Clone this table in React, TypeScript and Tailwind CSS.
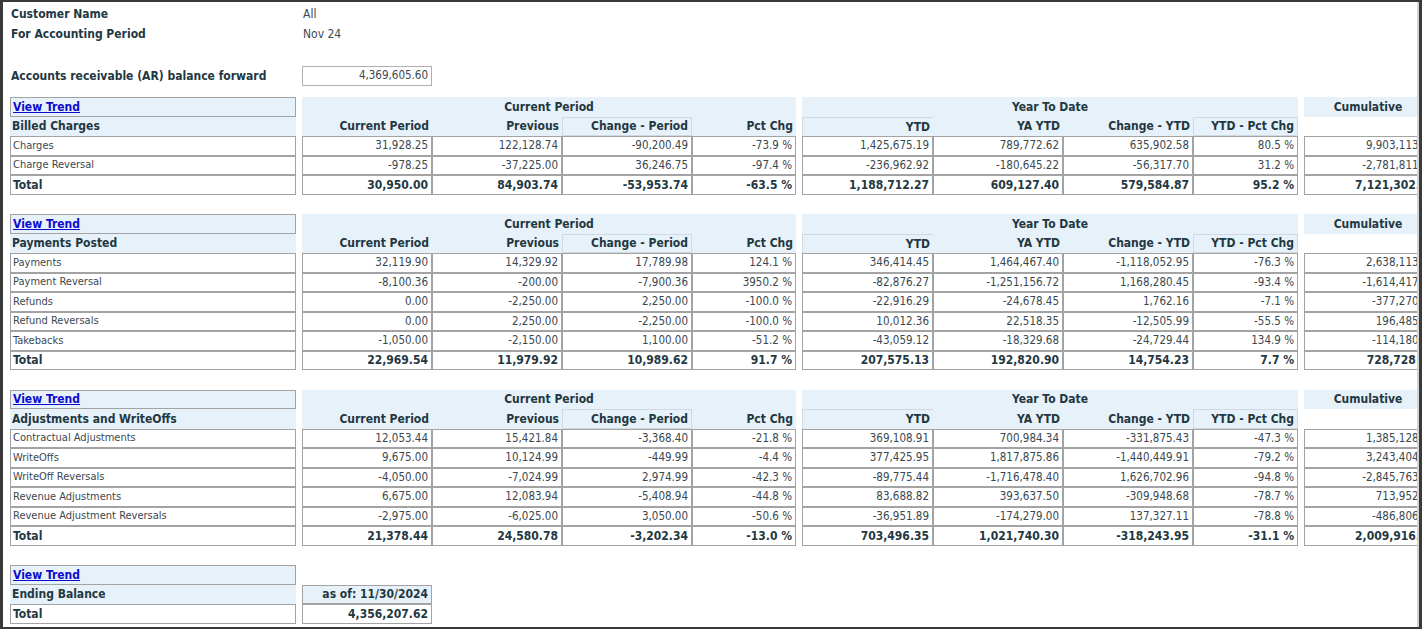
import React from "react";

type Row = { label: string; v: string[]; total?: boolean };

const GRID =
  "grid grid-cols-[286px_6px_130px_130px_130px_104px_6px_131px_130px_130px_105px_6px_135px] auto-rows-[19.5px]";

const BD = "border border-[#a3a3a3]";
const BLUE = "bg-[#e7f1f9]";
const HEAD = "font-bold text-[#1f3842] text-[12px]";
const NORM = "text-[#3b4850] text-[11px]";
const NUM = "text-[#3b4850] text-[11.5px]";
const TNUM = "font-bold text-[#1f3842] text-[12px]";

function Section({ title, rows }: { title: string; rows: Row[] }) {
  const subs = ["Current Period", "Previous", "Change - Period", "Pct Chg"];
  const ysubs = ["YTD", "YA YTD", "Change - YTD", "YTD - Pct Chg"];
  const subBorder = ["", "", "border border-[#cfd9df]", ""];
  const ysubBorder = [
    "border-l border-t border-[#cfd9df]",
    "",
    "",
    "border border-[#cfd9df]",
  ];
  return (
    <div className={GRID}>
      {/* row 1 */}
      <div className={`${BD} ${BLUE} px-[2px] flex items-center`}>
        <a href="#" className="font-bold underline text-[#0c0ccf] text-[12px] leading-none">
          View Trend
        </a>
      </div>
      <div />
      <div className={`col-span-4 ${BLUE} ${HEAD} flex items-center justify-center`}>Current Period</div>
      <div />
      <div className={`col-span-4 ${BLUE} ${HEAD} flex items-center justify-center`}>Year To Date</div>
      <div />
      <div className={`${BLUE} ${HEAD} flex items-center justify-center pr-[7px]`}>Cumulative</div>
      {/* row 2 */}
      <div className={`${BLUE} ${HEAD} px-[2px] flex items-center`}>{title}</div>
      <div />
      {subs.map((s, i) => (
        <div key={s} className={`${BLUE} ${HEAD} ${subBorder[i]} flex items-center justify-end pr-[3px] whitespace-nowrap`}>
          {s}
        </div>
      ))}
      <div />
      {ysubs.map((s, i) => (
        <div key={s} className={`${BLUE} ${HEAD} ${ysubBorder[i]} flex items-center justify-end pr-[3px] whitespace-nowrap`}>
          {s}
        </div>
      ))}
      <div />
      <div />
      {rows.map((r) => {
        const t = r.total ? HEAD : NORM;
        const n = r.total ? TNUM : NUM;
        return (
          <React.Fragment key={r.label}>
            <div className={`${BD} ${t} px-[2px] flex items-center whitespace-nowrap`}>{r.label}</div>
            <div />
            {r.v.slice(0, 4).map((x, i) => (
              <div key={"a" + i} className={`${BD} ${n} flex items-center justify-end pr-[3px] whitespace-nowrap`}>
                {x}
              </div>
            ))}
            <div />
            {r.v.slice(4, 8).map((x, i) => (
              <div key={"b" + i} className={`${BD} ${n} flex items-center justify-end pr-[3px] whitespace-nowrap`}>
                {x}
              </div>
            ))}
            <div />
            <div className={`${BD} ${n} flex items-center justify-end pr-[3px] whitespace-nowrap`}>{r.v[8]}</div>
          </React.Fragment>
        );
      })}
      {/* blank spacer row */}
      <div className="col-span-13" />
    </div>
  );
}

const billed: Row[] = [
  { label: "Charges", v: ["31,928.25", "122,128.74", "-90,200.49", "-73.9 %", "1,425,675.19", "789,772.62", "635,902.58", "80.5 %", "9,903,113.36"] },
  { label: "Charge Reversal", v: ["-978.25", "-37,225.00", "36,246.75", "-97.4 %", "-236,962.92", "-180,645.22", "-56,317.70", "31.2 %", "-2,781,811.14"] },
  { label: "Total", total: true, v: ["30,950.00", "84,903.74", "-53,953.74", "-63.5 %", "1,188,712.27", "609,127.40", "579,584.87", "95.2 %", "7,121,302.22"] },
];

const payments: Row[] = [
  { label: "Payments", v: ["32,119.90", "14,329.92", "17,789.98", "124.1 %", "346,414.45", "1,464,467.40", "-1,118,052.95", "-76.3 %", "2,638,113.45"] },
  { label: "Payment Reversal", v: ["-8,100.36", "-200.00", "-7,900.36", "3950.2 %", "-82,876.27", "-1,251,156.72", "1,168,280.45", "-93.4 %", "-1,614,417.23"] },
  { label: "Refunds", v: ["0.00", "-2,250.00", "2,250.00", "-100.0 %", "-22,916.29", "-24,678.45", "1,762.16", "-7.1 %", "-377,270.18"] },
  { label: "Refund Reversals", v: ["0.00", "2,250.00", "-2,250.00", "-100.0 %", "10,012.36", "22,518.35", "-12,505.99", "-55.5 %", "196,485.60"] },
  { label: "Takebacks", v: ["-1,050.00", "-2,150.00", "1,100.00", "-51.2 %", "-43,059.12", "-18,329.68", "-24,729.44", "134.9 %", "-114,180.75"] },
  { label: "Total", total: true, v: ["22,969.54", "11,979.92", "10,989.62", "91.7 %", "207,575.13", "192,820.90", "14,754.23", "7.7 %", "728,728.89"] },
];

const adjustments: Row[] = [
  { label: "Contractual Adjustments", v: ["12,053.44", "15,421.84", "-3,368.40", "-21.8 %", "369,108.91", "700,984.34", "-331,875.43", "-47.3 %", "1,385,128.41"] },
  { label: "WriteOffs", v: ["9,675.00", "10,124.99", "-449.99", "-4.4 %", "377,425.95", "1,817,875.86", "-1,440,449.91", "-79.2 %", "3,243,404.17"] },
  { label: "WriteOff Reversals", v: ["-4,050.00", "-7,024.99", "2,974.99", "-42.3 %", "-89,775.44", "-1,716,478.40", "1,626,702.96", "-94.8 %", "-2,845,763.55"] },
  { label: "Revenue Adjustments", v: ["6,675.00", "12,083.94", "-5,408.94", "-44.8 %", "83,688.82", "393,637.50", "-309,948.68", "-78.7 %", "713,952.30"] },
  { label: "Revenue Adjustment Reversals", v: ["-2,975.00", "-6,025.00", "3,050.00", "-50.6 %", "-36,951.89", "-174,279.00", "137,327.11", "-78.8 %", "-486,806.64"] },
  { label: "Total", total: true, v: ["21,378.44", "24,580.78", "-3,202.34", "-13.0 %", "703,496.35", "1,021,740.30", "-318,243.95", "-31.1 %", "2,009,916.69"] },
];

export default function App() {
  return (
    <div className="w-[1422px] h-[629px] bg-white border-l-[3px] border-r-[3px] border-t-2 border-b-2 border-[#3a3a3a] font-['DejaVu_Sans_Condensed','DejaVu_Sans',sans-serif] text-[11px] box-border overflow-hidden">
      <div className="h-full border-r-2 border-[#d4d4d4] overflow-hidden pl-[7px] pt-[2px]">
        <div className="grid grid-cols-[292px_200px] auto-rows-[20px]">
          <div className={`${HEAD} pl-[1px] flex items-center`}>Customer Name</div>
          <div className={`${NORM} text-[12px] pl-[1px] flex items-center`}>All</div>
          <div className={`${HEAD} pl-[1px] flex items-center`}>For Accounting Period</div>
          <div className={`${NORM} text-[12px] pl-[1px] flex items-center`}>Nov 24</div>
        </div>
        <div className="flex items-center mt-[22px] h-[20px]">
          <div className={`${HEAD} w-[292px] pl-[1px]`}>Accounts receivable (AR) balance forward</div>
          <div className={`w-[130px] h-[20px] border border-[#b0b0b0] ${NUM} flex items-center justify-end pr-[3px]`}>
            4,369,605.60
          </div>
        </div>
        <div className="mt-[11px] w-[1440px]">
          <Section title="Billed Charges" rows={billed} />
          <Section title="Payments Posted" rows={payments} />
          <Section title="Adjustments and WriteOffs" rows={adjustments} />
          <div className={GRID}>
            <div className={`${BD} ${BLUE} px-[2px] flex items-center`}>
              <a href="#" className="font-bold underline text-[#0c0ccf] text-[12px] leading-none">
                View Trend
              </a>
            </div>
            <div className="col-span-12" />
            <div className={`${BLUE} ${HEAD} px-[2px] flex items-center`}>Ending Balance</div>
            <div />
            <div className={`${BD} ${BLUE} ${HEAD} flex items-center justify-end pr-[3px]`}>as of: 11/30/2024</div>
            <div className="col-span-10" />
            <div className={`${BD} ${HEAD} px-[2px] flex items-center`}>Total</div>
            <div />
            <div className={`${BD} ${TNUM} flex items-center justify-end pr-[3px]`}>4,356,207.62</div>
            <div className="col-span-10" />
          </div>
        </div>
      </div>
    </div>
  );
}
